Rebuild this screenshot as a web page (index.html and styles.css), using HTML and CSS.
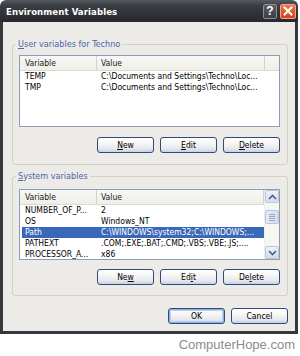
FILE: index.html
```html
<!DOCTYPE html>
<html>
<head>
<meta charset="utf-8">
<link rel="stylesheet" href="styles.css">
</head>
<body>
<div class="window">
  <div class="titlebar">
    <span class="title">Environment Variables</span>
    <span class="tb-btn help">?</span>
    <span class="tb-btn close"><svg width="10" height="10" viewBox="0 0 10 10"><path d="M1.5 1.5 L8.5 8.5 M8.5 1.5 L1.5 8.5" stroke="#fff" stroke-width="2" stroke-linecap="square"/></svg></span>
  </div>
  <div class="body">
    <fieldset class="group user">
      <legend><u>U</u>ser variables for Techno</legend>
      <div class="list">
        <div class="lv-main">
          <div class="lv-header"><span class="c1">Variable</span><span class="c2">Value</span><span class="c3"></span></div>
          <div class="row"><span class="c1">TEMP</span><span class="c2">C:\Documents and Settings\Techno\Loc...</span></div>
          <div class="row"><span class="c1">TMP</span><span class="c2">C:\Documents and Settings\Techno\Loc...</span></div>
        </div>
      </div>
      <div class="btns">
        <button class="btn"><u>N</u>ew</button>
        <button class="btn"><u>E</u>dit</button>
        <button class="btn"><u>D</u>elete</button>
      </div>
    </fieldset>
    <fieldset class="group sys">
      <legend><u>S</u>ystem variables</legend>
      <div class="list">
        <div class="lv-main">
          <div class="lv-header"><span class="c1">Variable</span><span class="c2">Value</span></div>
          <div class="row"><span class="c1">NUMBER_OF_P...</span><span class="c2">2</span></div>
          <div class="row"><span class="c1">OS</span><span class="c2">Windows_NT</span></div>
          <div class="row selected"><span class="c1">Path</span><span class="c2">C:\WINDOWS\system32;C:\WINDOWS;...</span></div>
          <div class="row"><span class="c1">PATHEXT</span><span class="c2">.COM;.EXE;.BAT;.CMD;.VBS;.VBE;.JS;....</span></div>
          <div class="row"><span class="c1">PROCESSOR_A...</span><span class="c2">x86</span></div>
        </div>
        <div class="scrollbar">
          <div class="sb-btn"><svg width="9" height="6" viewBox="0 0 9 6"><path d="M1 5 L4.5 1.5 L8 5" fill="none" stroke="#4d6185" stroke-width="1.6"/></svg></div>
          <div class="sb-track">
            <div class="sb-thumb"><span></span><span></span><span></span><span></span></div>
          </div>
          <div class="sb-btn"><svg width="9" height="6" viewBox="0 0 9 6"><path d="M1 1 L4.5 4.5 L8 1" fill="none" stroke="#4d6185" stroke-width="1.6"/></svg></div>
        </div>
      </div>
      <div class="btns">
        <button class="btn">Ne<u>w</u></button>
        <button class="btn">Ed<u>i</u>t</button>
        <button class="btn">De<u>l</u>ete</button>
      </div>
    </fieldset>
    <div class="dlg-btns">
      <button class="btn default">OK</button>
      <button class="btn">Cancel</button>
    </div>
  </div>
</div>
<div class="watermark">ComputerHope.com</div>
</body>
</html>
```

FILE: styles.css
```css
html, body {
  margin: 0;
  padding: 0;
  background: #ffffff;
}
body {
  font-family: "DejaVu Sans Condensed", "DejaVu Sans", sans-serif;
  font-size: 8.5px;
  color: #000;
  width: 300px;
  height: 356px;
  overflow: hidden;
}
.window {
  width: 298px;
}
.titlebar {
  height: 22px;
  box-sizing: border-box;
  display: flex;
  align-items: center;
  gap: 3px;
  padding: 0 2px 0 6px;
  background: linear-gradient(#565a60 0%, #3a3d42 25%, #2e3035 70%, #28292d 100%);
  border-radius: 6px 6px 0 0;
}
.title {
  flex: 1;
  color: #ffffff;
  font-family: "DejaVu Sans Condensed", "DejaVu Sans", sans-serif;
  font-weight: bold;
  font-size: 9.5px;
  letter-spacing: 0.1px;
}
.tb-btn {
  width: 14px;
  height: 15px;
  box-sizing: border-box;
  display: flex;
  align-items: center;
  justify-content: center;
  border-radius: 2px;
  border: 1px solid #8c9096;
}
.help {
  background: linear-gradient(#5b5f66, #3b3e44);
  color: #ffffff;
  font-family: "Liberation Sans", sans-serif;
  font-weight: bold;
  font-size: 12px;
}
.close {
  width: 16px;
  background: linear-gradient(#ef7650, #e0542b 60%, #cc451f);
  border-color: #f0a890;
}
.body {
  background: #ecebe8;
  border: 3px solid #35383d;
  border-top: 0;
  padding: 16px 7px 7px 9px;
}
.group {
  margin: 0;
  border: 1px solid #d3d2c7;
  border-radius: 3px;
  padding: 5px 7px 11px 6px;
  min-width: 0;
}
.group.sys {
  margin-top: 5px;
  padding-top: 7px;
  padding-bottom: 10px;
}
legend {
  padding: 0 2px;
  margin-left: -3px;
  line-height: 12px;
  color: #4c64a8;
  font-size: 9px;
}
legend u {
  text-decoration-thickness: 1px;
}
.list {
  display: flex;
  height: 72px;
  box-sizing: border-box;
  border: 1px solid #8a9cb6;
  background: #ffffff;
}
.sys .list {
  height: 71px;
}
.lv-main {
  flex: 1;
  min-width: 0;
  overflow: hidden;
}
.lv-header {
  display: flex;
  height: 15px;
  box-sizing: border-box;
  align-items: center;
  background: linear-gradient(#f8f8f5, #efeee8);
  border-bottom: 1px solid #dcdad0;
  color: #202020;
}
.lv-header span {
  height: 100%;
  box-sizing: border-box;
  display: flex;
  align-items: center;
  border-right: 1px solid #d4d2c6;
}
.c1 {
  width: 77px;
  flex: none;
  padding-left: 5px;
  box-sizing: border-box;
  overflow: hidden;
  white-space: nowrap;
}
.c2 {
  flex: 1;
  padding-left: 4px;
  overflow: hidden;
  white-space: nowrap;
  box-sizing: border-box;
}
.user .lv-header .c2 {
  flex: none;
  width: 168px;
}
.lv-header .c3 {
  flex: 1;
  border-right: 0;
}
.row {
  display: flex;
  height: 11px;
  line-height: 11px;
}
.row.selected {
  background: #3a68b8;
  color: #ffffff;
  margin-left: 2px;
}
.row.selected .c1 {
  width: 75px;
  padding-left: 3px;
}
.scrollbar {
  width: 15px;
  flex: none;
  display: flex;
  flex-direction: column;
  background: #f6f6f3;
  border-left: 1px solid #eeede8;
  box-sizing: border-box;
}
.sb-btn {
  height: 13px;
  box-sizing: border-box;
  border: 1px solid #b8c6de;
  border-radius: 2px;
  background: linear-gradient(#eef2fa, #d4dcec);
  display: flex;
  align-items: center;
  justify-content: center;
}
.sb-track {
  flex: 1;
  padding-top: 7px;
}
.sb-thumb {
  height: 14px;
  box-sizing: border-box;
  border: 1px solid #b8c6de;
  border-radius: 2px;
  background: linear-gradient(90deg, #e4e9f4, #d6ddec);
  display: flex;
  flex-direction: column;
  align-items: center;
  justify-content: center;
  gap: 1px;
}
.sb-thumb span {
  width: 6px;
  height: 1px;
  background: #9aa8c4;
}
.btns, .dlg-btns {
  display: flex;
  justify-content: flex-end;
  gap: 6px;
}
.btns {
  margin-top: 10px;
}
.sys .btns {
  margin-top: 9px;
}
.dlg-btns {
  margin-top: 12px;
}
.btn {
  width: 57px;
  height: 16px;
  padding: 0;
  margin: 0;
  box-sizing: border-box;
  font-family: "DejaVu Sans Condensed", "DejaVu Sans", sans-serif;
  font-size: 8.5px;
  color: #000;
  border: 1px solid #2f4c78;
  border-radius: 3px;
  background: linear-gradient(#ffffff 0%, #f6f6f4 40%, #e6e8ee 75%, #c7d1e2 100%);
  line-height: 14px;
}
.btn.default {
  box-shadow: inset 0 0 0 1px #8fb0e6, inset 0 0 0 2px #bcd0f0;
}
.watermark {
  text-align: right;
  padding-right: 5px;
  margin-top: 3px;
  font-family: "Liberation Sans", sans-serif;
  font-size: 13px;
  color: #8c8c8c;
}
```
